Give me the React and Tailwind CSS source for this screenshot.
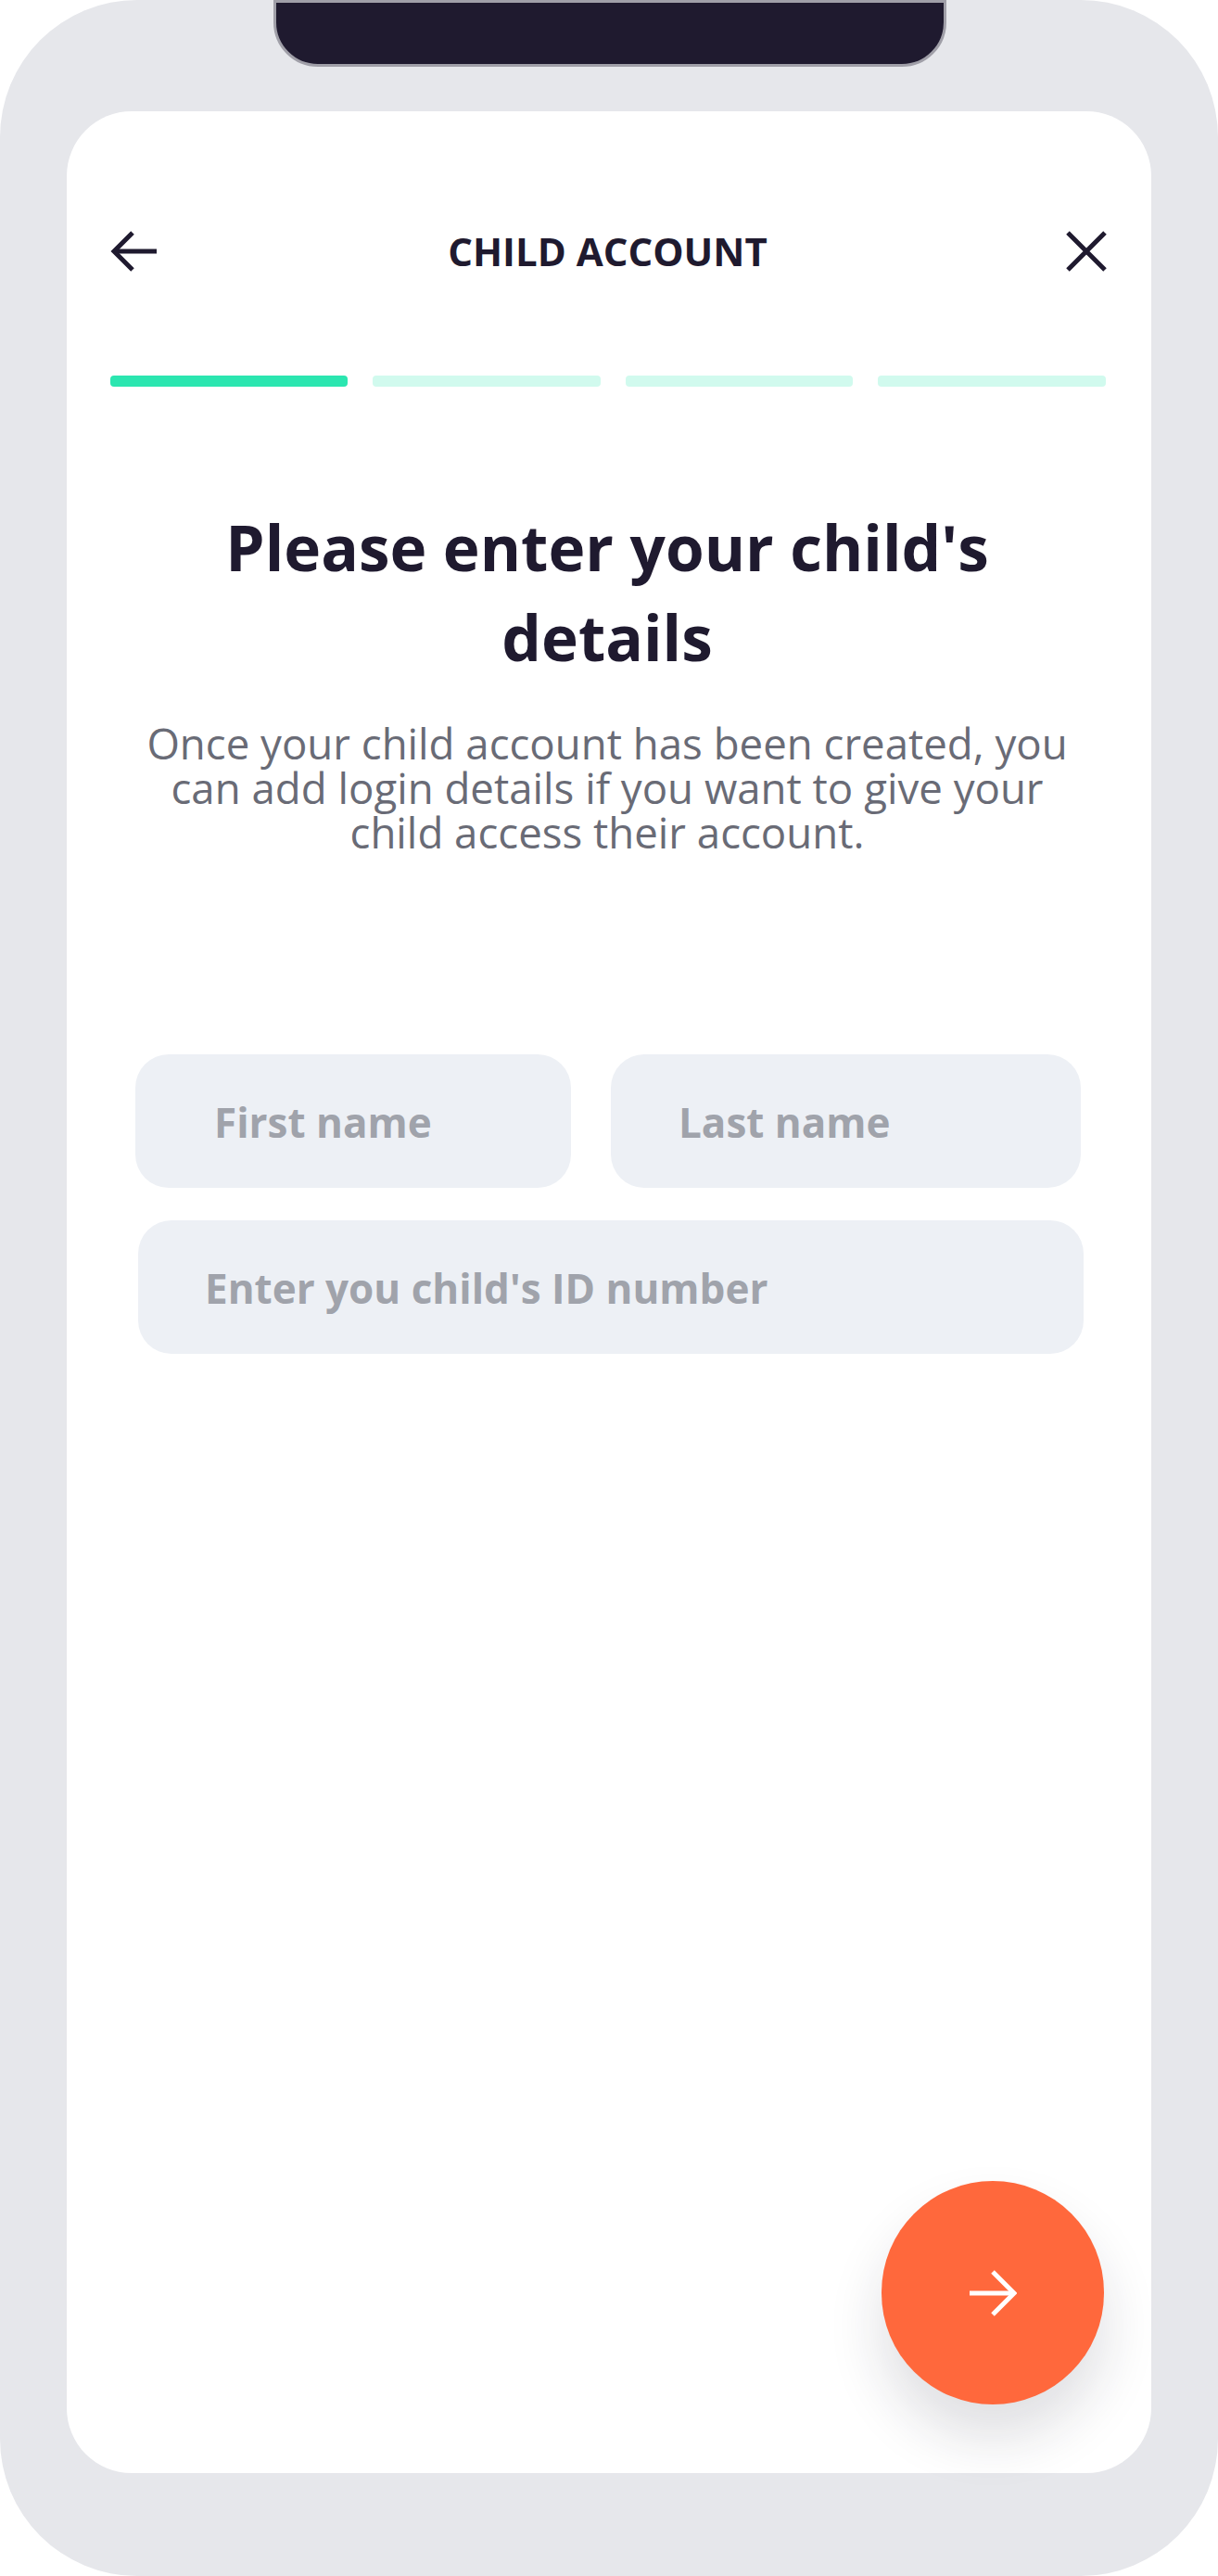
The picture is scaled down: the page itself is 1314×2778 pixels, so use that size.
import React from "react";

const FONT = "font-['Open_Sans','Noto_Sans',sans-serif]";

function Field({ label, className, textClass }) {
  return (
    <div className={`h-[144px] rounded-[36px] bg-[#edf0f5] flex items-center ${className}`}>
      <span className={`text-[#a0a3ab] text-[44px] font-bold leading-none pt-[2px] ${textClass}`}>{label}</span>
    </div>
  );
}

export default function App() {
  return (
    <div className={`w-[1314px] h-[2778px] bg-white ${FONT}`}>
      <div className="relative w-full h-full bg-[#e6e7eb] rounded-[148px] pt-[120px] pb-[111px] px-[72px]">
        {/* notch */}
        <div className="absolute left-[295px] top-0 w-[726px] h-[72px] bg-[#1f1a2f] border-[3px] border-[#a09fa8] rounded-b-[48px]" />

        <div className="h-full bg-white rounded-[70px] flex flex-col">
          {/* header */}
          <div className="mt-[130px] h-[42px] pl-[47px] pr-[48px] flex items-center justify-between">
            <svg width="50" height="44" viewBox="0 0 50 44" fill="none" stroke="#1f1a2f" strokeWidth="5">
              <path d="M50 22H4" />
              <path d="M24 2L4 22L24 42" />
            </svg>
            <span className="mr-[8px] text-[42px] font-bold text-[#1f1a2f] leading-none">CHILD ACCOUNT</span>
            <svg width="44" height="44" viewBox="0 0 44 44" fill="none" stroke="#1f1a2f" strokeWidth="5">
              <path d="M2 2L42 42M42 2L2 42" />
            </svg>
          </div>

          {/* steps */}
          <div className="mt-[113px] pl-[47px] pr-[49px] flex gap-[27px]">
            <div className="w-[256px] h-3 rounded-[4px] bg-[#2be6b0]" />
            <div className="flex-1 h-3 rounded-[4px] bg-[#d1faee]" />
            <div className="flex-1 h-3 rounded-[4px] bg-[#d1faee]" />
            <div className="flex-1 h-3 rounded-[4px] bg-[#d1faee]" />
          </div>

          <h1 className="mt-[125px] pr-[4px] text-center text-[67.5px] leading-[97px] font-bold text-[#1f1a2f]">
            Please enter your child's
            <br />
            details
          </h1>
          <p className="mt-[41px] pr-[4px] text-center text-[45.6px] leading-[48px] text-[#696b76]">
            Once your child account has been created, you
            <br />
            can add login details if you want to give your
            <br />
            child access their account.
          </p>

          {/* form */}
          <div className="mt-[216px] ml-[74px] flex gap-[43px]">
            <Field label="First name" className="w-[470px]" textClass="ml-[85px]" />
            <Field label="Last name" className="w-[507px]" textClass="ml-[73px]" />
          </div>
          <Field label="Enter you child's ID number" className="mt-[35px] ml-[77px] w-[1020px]" textClass="ml-[72px]" />

          {/* next */}
          <div className="mt-auto mb-[74px] mr-[51px] flex justify-end">
            <button className="w-[240px] h-[241px] rounded-full bg-[#ff683c] flex items-center justify-center shadow-[0_36px_60px_rgba(31,26,47,0.14)]">
              <svg width="52" height="50" viewBox="0 0 52 50" fill="none" stroke="#ffffff" strokeWidth="5">
                <path d="M1 25H48" />
                <path d="M26 2L49 25L26 48" />
              </svg>
            </button>
          </div>
        </div>
      </div>
    </div>
  );
}
